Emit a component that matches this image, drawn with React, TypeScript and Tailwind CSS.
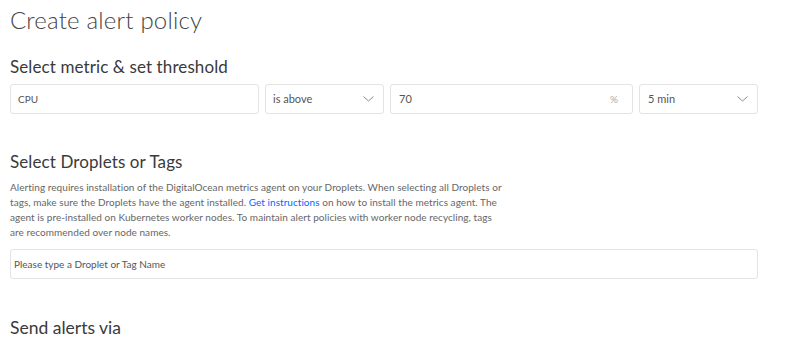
import React from "react";

function Chevron() {
  return (
    <svg width="11" height="6" viewBox="0 0 11 6" fill="none" className="shrink-0">
      <path d="M0.5 0.5L5.5 5L10.5 0.5" stroke="#8a8a8a" strokeWidth="1" />
    </svg>
  );
}

export default function App() {
  const font = { fontFamily: "Lato, 'Open Sans', sans-serif" };
  return (
    <div className="w-[800px] h-[341px] bg-white overflow-hidden pl-[10px]" style={font}>
      <h1 className="pt-[4px] text-[24px] leading-[32px] font-light text-[#444] tracking-[0.2px]">
        Create alert policy
      </h1>
      <h2 className="mt-[20px] text-[17px] leading-[22px] text-[#3a3a3a] tracking-[0.1px]">
        Select metric &amp; set threshold
      </h2>
      <div className="mt-[6px] grid grid-cols-[249px_119px_243px_119px] gap-[6px] h-[30px]">
        <div className="border border-[#e3e3e3] rounded-[3px] flex items-center px-[7px] text-[10px] text-[#555]">
          CPU
        </div>
        <div className="border border-[#e3e3e3] rounded-[3px] flex items-center justify-between pl-[7px] pr-[9px] text-[11px] text-[#555]">
          <span>is above</span>
          <Chevron />
        </div>
        <div className="border border-[#e3e3e3] rounded-[3px] flex items-center justify-between pl-[8px] pr-[14px] text-[11px] text-[#555]">
          <span>70</span>
          <span className="text-[10px] text-[#aaa]">%</span>
        </div>
        <div className="border border-[#e3e3e3] rounded-[3px] flex items-center justify-between pl-[8px] pr-[9px] text-[11px] text-[#555]">
          <span>5 min</span>
          <Chevron />
        </div>
      </div>
      <h2 className="mt-[37px] text-[17px] leading-[22px] text-[#3a3a3a] tracking-[0.1px]">Select Droplets or Tags</h2>
      <p className="mt-[7px] w-[496px] text-[10px] leading-[15px] text-[#666] tracking-[0.05px]">
        Alerting requires installation of the DigitalOcean metrics agent on your Droplets. When selecting all Droplets or
        tags, make sure the Droplets have the agent installed.{" "}
        <span className="text-[#0069ff]">Get instructions</span> on how to install the metrics agent. The agent is
        pre-installed on Kubernetes worker nodes. To maintain alert policies with worker node recycling, tags are
        recommended over node names.
      </p>
      <div className="mt-[9px] w-[748px] h-[30px] border border-[#e3e3e3] rounded-[3px] flex items-center px-[3px] text-[10px] text-[#555]">
        Please type a Droplet or Tag Name
      </div>
      <h2 className="mt-[38px] text-[17.5px] leading-[22px] text-[#3a3a3a]">Send alerts via</h2>
    </div>
  );
}
